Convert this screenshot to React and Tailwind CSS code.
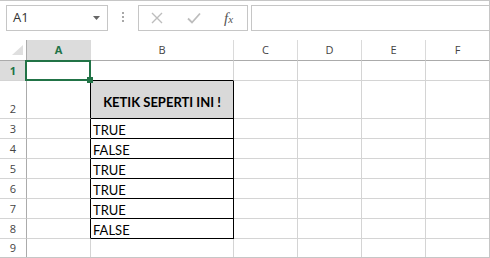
import React from 'react';

const rows = [
  { n: 1, h: 'h-[20px]' },
  { n: 2, h: 'h-[38px]', text: 'KETIK SEPERTI INI !' },
  { n: 3, h: 'h-[20px]', text: 'TRUE' },
  { n: 4, h: 'h-[20px]', text: 'FALSE' },
  { n: 5, h: 'h-[20px]', text: 'TRUE' },
  { n: 6, h: 'h-[20px]', text: 'TRUE' },
  { n: 7, h: 'h-[20px]', text: 'TRUE' },
  { n: 8, h: 'h-[20px]', text: 'FALSE' },
  { n: 9, h: 'h-[18px]', last: true },
];

const Row = ({ n, h, text, last }) => {
  const inTable = n >= 2 && n <= 8;
  const bottom = last ? '' : 'border-b';
  const selected = n === 1;

  let bCell = 'border-r-[#d4d4d4] border-b-[#d4d4d4]';
  if (inTable) bCell = 'border-r-black border-b-black';
  else if (n === 1) bCell = 'border-r-[#d4d4d4] border-b-black';

  return (
    <div className={`flex ${h}`}>
      <div
        className={`w-[27px] border-r ${bottom} border-r-[#ababab] border-b-[#d4d4d4] flex items-end justify-center pb-[2px] text-[11px] leading-[15px] font-['Open_Sans',sans-serif] ${
          selected ? 'bg-[#dcdcdc] text-[#217346] font-bold' : 'text-[#444]'
        }`}
      >
        {n}
      </div>
      <div
        className={`w-[64px] border-r ${bottom} border-b-[#d4d4d4] ${
          inTable ? 'border-r-black' : 'border-r-[#d4d4d4]'
        }`}
      />
      {n === 2 ? (
        <div className={`w-[143px] border-r border-b ${bCell} bg-[#d9d9d9] flex items-center justify-center pt-[4px] text-[13px] leading-[16px] font-bold text-black`}>
          {text}
        </div>
      ) : (
        <div className={`w-[143px] border-r ${bottom} ${bCell} flex items-end pl-[2px] text-[13px] leading-[16px] text-black`}>
          {text}
        </div>
      )}
      <div className={`w-[64px] border-r ${bottom} border-r-[#d4d4d4] border-b-[#d4d4d4]`} />
      <div className={`w-[64px] border-r ${bottom} border-r-[#d4d4d4] border-b-[#d4d4d4]`} />
      <div className={`w-[64px] border-r ${bottom} border-r-[#d4d4d4] border-b-[#d4d4d4]`} />
      <div className={`flex-1 ${bottom} border-b-[#d4d4d4]`} />
    </div>
  );
};

const Toolbar = () => (
  <div className="h-[39px] flex items-start pt-[4px] pl-[6px]">
    <div className="w-[102px] h-[26px] border border-[#c6c6c6] flex items-center pl-[6px] pr-[7px]">
      <span className="flex-1 text-[13px] text-[#333] font-['Open_Sans',sans-serif]">A1</span>
      <svg width="7" height="4" viewBox="0 0 7 4">
        <path d="M0 0 H7 L3.5 4 Z" fill="#666" />
      </svg>
    </div>
    <div className="ml-[14px] mt-[7px] w-[3px] flex flex-col gap-[2px]">
      <div className="w-[2px] h-[2px] bg-[#a8a8a8]" />
      <div className="w-[2px] h-[2px] bg-[#a8a8a8]" />
      <div className="w-[2px] h-[2px] bg-[#a8a8a8]" />
    </div>
    <div className="ml-[13px] w-[110px] h-[26px] border border-[#c6c6c6] flex items-center">
      <svg width="12" height="12" viewBox="0 0 12 12" className="ml-[12px]">
        <path d="M1 1 L11 11 M11 1 L1 11" stroke="#bdbdbd" strokeWidth="1.4" />
      </svg>
      <svg width="14" height="12" viewBox="0 0 14 12" className="ml-[24px]">
        <path d="M1 6.5 L5 10.5 L13 1.5" stroke="#bdbdbd" strokeWidth="1.8" fill="none" />
      </svg>
      <span className="ml-[23px] italic text-[#555] font-['Liberation_Serif',serif] leading-none">
        <span className="text-[15px]">f</span>
        <span className="text-[11px]">x</span>
      </span>
    </div>
    <div className="ml-[3px] flex-1 h-[26px] border border-r-0 border-[#c6c6c6]" />
  </div>
);

const Header = () => (
  <div className="flex h-[21px] font-['Open_Sans',sans-serif] text-[11px] text-[#444]">
    <div className="w-[27px] border-r border-b border-r-[#ababab] border-b-[#ababab] relative">
      <svg width="27" height="20" viewBox="0 0 27 20" className="absolute left-0 top-0">
        <path d="M23 5 L23 15 L12 15 Z" fill="#dfdfdf" />
      </svg>
    </div>
    <div className="w-[64px] border-r border-b border-r-[#dadada] border-b-[#ababab] bg-[#dcdcdc] text-[#217346] font-bold flex items-center justify-center">
      A
    </div>
    <div className="w-[143px] border-r border-b border-r-[#dadada] border-b-[#ababab] flex items-center justify-center">B</div>
    <div className="w-[64px] border-r border-b border-r-[#dadada] border-b-[#ababab] flex items-center justify-center">C</div>
    <div className="w-[64px] border-r border-b border-r-[#dadada] border-b-[#ababab] flex items-center justify-center">D</div>
    <div className="w-[64px] border-r border-b border-r-[#dadada] border-b-[#ababab] flex items-center justify-center">E</div>
    <div className="flex-1 border-b border-b-[#ababab] flex items-center justify-center">F</div>
  </div>
);

export default function App() {
  return (
    <div className="w-[490px] h-[258px] bg-white border-t border-r border-b border-[#c6c6c6] flex flex-col overflow-hidden font-['Lato',sans-serif]">
      <Toolbar />
      <div className="relative flex-1 flex flex-col">
        <Header />
        {rows.map((r) => (
          <Row key={r.n} {...r} />
        ))}
        <div className="absolute left-[25px] top-[20px] w-[66px] h-[21px] border-2 border-[#217346]" />
        <div className="absolute left-[87px] top-[37px] w-[6px] h-[6px] bg-[#217346]" />
      </div>
    </div>
  );
}
